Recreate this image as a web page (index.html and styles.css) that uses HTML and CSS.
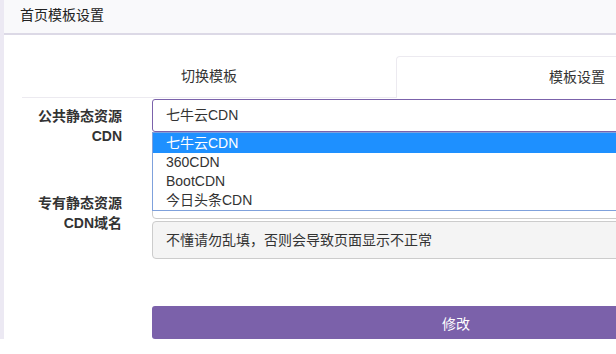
FILE: index.html
```html
<html>
<head>
<meta charset="utf-8">
<link rel="stylesheet" href="styles.css">
</head>
<body>
<div class="page">
  <div class="panel-head">首页模板设置</div>
  <div class="panel-body">
    <ul class="tabs">
      <li>切换模板</li>
      <li class="active">模板设置</li>
    </ul>

    <div class="form">
      <div class="row row-cdn">
        <div class="label">公共静态资源CDN</div>
        <div class="field">
          <div class="select">七牛云CDN</div>
          <ul class="dropdown">
            <li class="picked">七牛云CDN</li>
            <li>360CDN</li>
            <li>BootCDN</li>
            <li>今日头条CDN</li>
          </ul>
        </div>
      </div>

      <div class="row row-domain">
        <div class="label">专有静态资源CDN域名</div>
        <div class="field">
          <div class="input"></div>
          <div class="note">不懂请勿乱填，否则会导致页面显示不正常</div>
        </div>
      </div>

      <div class="row row-submit">
        <div class="label"></div>
        <div class="field"><button class="btn">修改</button></div>
      </div>
    </div>
  </div>
</div>
</body>
</html>
```

FILE: styles.css
```css
body
{
  margin:0;
  padding:0;
  background-color:#fff;
  overflow:hidden;
  font-family:"Liberation Sans", "Noto Sans CJK SC", sans-serif;
  font-size:14px;
  color:#333;
}

.page
{
  width:774px;
  border-left:4px solid #ece9f3;
}

.panel-head
{
  height:33px;
  line-height:31px;
  padding-left:16px;
  background-color:#f9f9fb;
  border-bottom:2px solid #dcd9e6;
  color:#222;
}

.panel-body
{
  padding:21px 18px 0 18px;
}

.tabs
{
  display:flex;
  margin:0;
  padding:0;
  list-style:none;
}

.tabs li
{
  box-sizing:border-box;
  width:374px;
  height:42px;
  line-height:41px;
  text-align:center;
  border-bottom:1px solid #eceaf0;
}

.tabs li.active
{
  width:362px;
  border:1px solid #eceaf0;
  border-bottom:none;
  border-radius:4px 4px 0 0;
  line-height:40px;
}

.form
{
  margin-top:1px;
}

.row
{
  display:flex;
  gap:30px;
}

.row-cdn
{
  margin-bottom:40px;
}

.row-domain
{
  margin-bottom:47px;
}

.label
{
  width:100px;
  flex-shrink:0;
  padding-top:7px;
  line-height:20px;
  text-align:right;
  font-weight:bold;
}

.field
{
  flex:1;
  position:relative;
}

.select
{
  box-sizing:border-box;
  height:33px;
  line-height:31px;
  padding-left:13px;
  border:1px solid #7b62ab;
  border-radius:3px;
}

.dropdown
{
  position:absolute;
  top:33px;
  left:0;
  right:0;
  margin:0;
  padding:0;
  list-style:none;
  background-color:#fff;
  border:1px solid #7fa1dc;
  z-index:2;
}

.dropdown li
{
  height:19px;
  line-height:19px;
  padding-left:13px;
}

.dropdown li.picked
{
  height:20px;
  line-height:20px;
  background-color:#1e90ff;
  color:#fff;
}

.input
{
  box-sizing:border-box;
  height:33px;
  border:1px solid #ccc;
  border-radius:4px;
}

.note
{
  box-sizing:border-box;
  height:38px;
  line-height:36px;
  margin-top:2px;
  padding-left:13px;
  background-color:#f4f4f4;
  border:1px solid #ccc;
  border-radius:4px;
}

.btn
{
  display:block;
  width:100%;
  height:33px;
  border:none;
  border-radius:3px;
  background-color:#7b61aa;
  color:#fff;
  font-family:"Liberation Sans", "Noto Sans CJK SC", sans-serif;
  font-size:14px;
}
```
